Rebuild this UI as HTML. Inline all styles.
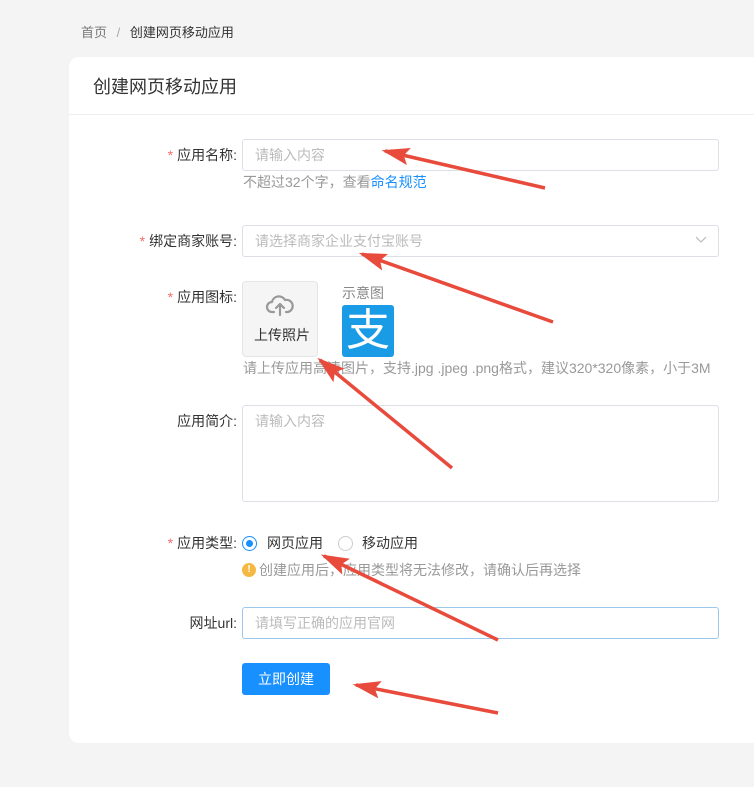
<!DOCTYPE html><html><head><meta charset="utf-8"><style>
*{box-sizing:border-box;margin:0;padding:0}
body{width:754px;height:787px;background:#f4f4f4;font-family:"Liberation Sans","Noto Sans CJK SC",sans-serif;font-size:14px;color:#333;position:relative;overflow:hidden}
.a{position:absolute;line-height:18px}
.card{left:69px;top:57px;width:700px;height:686px;background:#fff;border-radius:10px}
.lbl{text-align:right;width:162px;left:75px;font-size:14px;color:#333}
.lbl i{color:#f56c6c;font-style:normal;margin-right:4px}
.inp{left:242px;width:477px;height:32px;border:1px solid #dcdfe6;border-radius:3px;color:#bbb;padding:6px 12px;font-size:14px}
.tip{left:243px;font-size:14px;color:#999}
</style></head><body>
<div class="a" style="left:81px;top:24px;color:#777;font-size:13px">首页 <span style="margin:0 6px;color:#aaa">/</span> <span style="color:#333">创建网页移动应用</span></div>
<div class="a card"></div>
<div class="a" style="left:93px;top:76px;font-size:18px;line-height:22px;color:#333">创建网页移动应用</div>
<div class="a" style="left:69px;top:114px;width:685px;height:1px;background:#eee"></div>

<div class="a lbl" style="top:146px"><i>*</i>应用名称:</div>
<div class="a inp" style="top:139px">请输入内容</div>
<div class="a tip" style="top:173px">不超过32个字，查看<span style="color:#1890ff">命名规范</span></div>

<div class="a lbl" style="top:232px"><i>*</i>绑定商家账号:</div>
<div class="a inp" style="top:225px">请选择商家企业支付宝账号</div>
<svg class="a" style="left:695px;top:235px" width="12" height="10"><path d="M1 2l5 5 5-5" fill="none" stroke="#bbb" stroke-width="1.2"/></svg>

<div class="a lbl" style="top:288px"><i>*</i>应用图标:</div>
<div class="a" style="left:242px;top:281px;width:76px;height:76px;background:#f5f5f5;border:1px solid #e5e5e5;border-radius:4px"></div>
<svg class="a" style="left:265px;top:293px" width="30" height="26"><path d="M9 19H7a5 5 0 0 1 0-10 7 7 0 0 1 13-2 5 5 0 0 1 3 12h-2M15 22V11M11 15l4-4 4 4" fill="none" stroke="#999" stroke-width="2.2" stroke-linecap="round" stroke-linejoin="round"/></svg>
<div class="a" style="left:254px;top:326px;color:#333">上传照片</div>
<div class="a" style="left:342px;top:284px;color:#888">示意图</div>
<div class="a" style="left:342px;top:305px;width:52px;height:52px;background:#1a9be6;border-radius:3px;color:#fff;font-size:44px;line-height:52px;text-align:center">支</div>
<div class="a tip" style="top:359px">请上传应用高清图片，支持.jpg .jpeg .png格式，建议320*320像素，小于3M</div>

<div class="a lbl" style="top:412px">应用简介:</div>
<div class="a inp" style="top:405px;height:97px">请输入内容</div>

<div class="a lbl" style="top:534px"><i>*</i>应用类型:</div>
<div class="a" style="left:242px;top:536px;width:15px;height:15px;border:1px solid #1890ff;border-radius:50%"><div style="width:7px;height:7px;background:#1890ff;border-radius:50%;margin:3px"></div></div>
<div class="a" style="left:267px;top:534px">网页应用</div>
<div class="a" style="left:338px;top:536px;width:15px;height:15px;border:1px solid #ccc;border-radius:50%"></div>
<div class="a" style="left:362px;top:534px">移动应用</div>
<div class="a" style="left:242px;top:563px;width:14px;height:14px;background:#f5b942;border-radius:50%;color:#fff;font-size:10px;text-align:center;line-height:14px;font-weight:bold">!</div>
<div class="a tip" style="left:259px;top:561px">创建应用后，应用类型将无法修改，请确认后再选择</div>

<div class="a lbl" style="top:614px">网址url:</div>
<div class="a inp" style="top:607px;border-color:#9cc8ec">请填写正确的应用官网</div>

<div class="a" style="left:242px;top:663px;width:88px;height:32px;background:#1890ff;border-radius:3px;color:#fff;text-align:center;line-height:32px;font-size:14px">立即创建</div>

<svg class="a" style="left:0;top:0" width="754" height="787">
<defs><marker id="m" markerWidth="8" markerHeight="5" refX="7" refY="2.5" orient="auto"><path d="M0 0L8 2.5 0 5 1.5 2.5z" fill="#e84a3c"/></marker></defs>
<g stroke="#e84a3c" stroke-width="3.5" marker-end="url(#m)" fill="none">
<line x1="545" y1="188" x2="385" y2="151"/>
<line x1="553" y1="322" x2="362" y2="254"/>
<line x1="452" y1="468" x2="320" y2="360"/>
<line x1="498" y1="640" x2="324" y2="556"/>
<line x1="498" y1="713" x2="356" y2="685"/>
</g></svg>
</body></html>
